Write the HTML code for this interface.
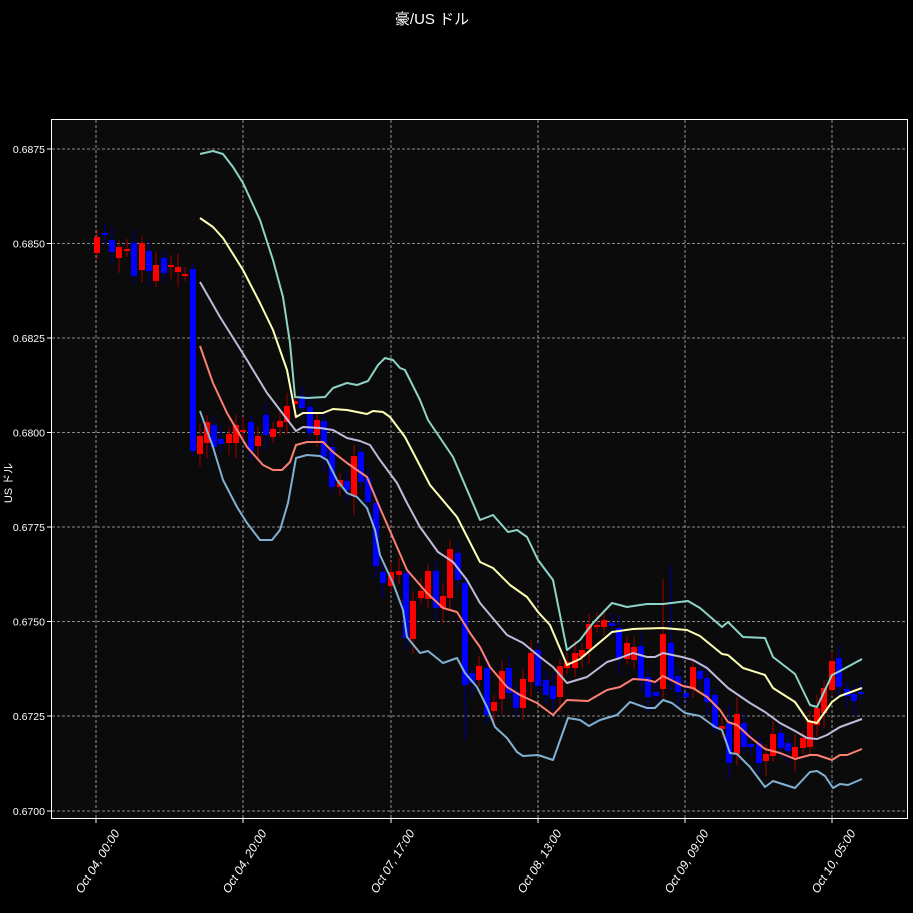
<!DOCTYPE html>
<html><head><meta charset="utf-8"><style>
html,body{margin:0;padding:0;background:#000;width:913px;height:913px;overflow:hidden}
svg{display:block}
text{font-family:"Liberation Sans","Noto Sans CJK JP",sans-serif;fill:#fff}
</style></head><body>
<svg id="s" width="913" height="913" viewBox="0 0 913 913" xmlns="http://www.w3.org/2000/svg">
<rect width="913" height="913" fill="#000"/>
<rect x="51.5" y="119.5" width="856" height="699" fill="#0b0b0b"/>
<g id="grid" stroke="#cfcfcf" stroke-width="0.8" stroke-dasharray="3,2" opacity="0.85"></g>
<g id="cand"></g>
<g id="lines" fill="none" stroke-width="2" stroke-linejoin="round"></g>
<rect x="51.5" y="119.5" width="856" height="699" fill="none" stroke="#fff" stroke-width="1"/>
<g id="ticks" stroke="#fff" stroke-width="1"></g>
<g id="labels"></g>
<text x="432" y="24" font-size="15" text-anchor="middle">豪/US ドル</text>
<text transform="translate(12,483) rotate(-90)" font-size="11" text-anchor="middle">US ドル</text>
</svg>
<script>
var NS="http://www.w3.org/2000/svg";
function el(t,a,p){var e=document.createElementNS(NS,t);for(var k in a)e.setAttribute(k,a[k]);document.getElementById(p).appendChild(e);return e;}
var ys=[[149,"0.6875"],[243.5,"0.6850"],[338,"0.6825"],[432.5,"0.6800"],[527,"0.6775"],[621.5,"0.6750"],[716,"0.6725"],[811,"0.6700"]];
var xs=[[96,"Oct 04, 00:00"],[243,"Oct 04, 20:00"],[391,"Oct 07, 17:00"],[538,"Oct 08, 13:00"],[685,"Oct 09, 09:00"],[832,"Oct 10, 05:00"]];
ys.forEach(function(y){el("line",{x1:52,x2:907,y1:y[0],y2:y[0]},"grid");el("line",{x1:47,x2:51,y1:y[0],y2:y[0]},"ticks");
var t=el("text",{x:45,y:y[0]+4,"font-size":10.5,"text-anchor":"end"},"labels");t.textContent=y[1];});
xs.forEach(function(x){el("line",{x1:x[0],x2:x[0],y1:120,y2:818},"grid");el("line",{x1:x[0],x2:x[0],y1:819,y2:823},"ticks");
var t=el("text",{transform:"translate("+(x[0]+24)+",833) rotate(-58)","font-size":12,"text-anchor":"end","font-style":"italic"},"labels");t.textContent=x[1];});
var C=[[97,"r",237,253],[105,"b",233,235],[112,"b",240,252],[119,"r",247,258],[127,"r",249,251],[134,"b",243,276],[142,"r",243,270],[149,"b",251,271],[156,"r",265,281],[164,"b",258,273],[171,"r",265,267],[178,"r",267,272],[185,"r",274,275],[193,"b",269,451],[200,"r",436,454],[207,"r",422,443],[214,"b",425,447],[221,"b",439,444],[229,"r",434,443],[236,"r",425,443],[243,"r",430,432],[251,"b",422,451],[258,"r",436,446],[266,"b",415,435],[273,"r",429,437],[280,"r",421,427],[287,"r",406,422],[295,"r",401,404],[302,"b",396,408],[310,"b",407,433],[317,"r",420,435],[324,"b",421,457],[332,"b",447,487],[340,"r",480,487],[347,"b",481,490],[354,"r",456,496],[361,"b",452,482],[368,"b",478,502],[376,"b",503,566],[383,"b",572,583],[391,"r",572,586],[399,"r",571,575],[406,"b",573,638],[413,"r",601,639],[421,"r",591,598],[428,"r",571,599],[436,"b",571,608],[443,"r",596,608],[450,"r",549,598],[458,"b",553,580],[465,"b",583,685],[472,"b",673,683],[479,"r",666,680],[487,"b",668,715],[494,"r",702,711],[502,"r",671,699],[509,"b",668,693],[516,"b",692,708],[523,"r",679,708],[531,"r",653,682],[538,"b",650,686],[546,"b",680,695],[553,"b",686,699],[560,"r",666,697],[567,"r",662,668],[575,"r",653,668],[582,"r",650,657],[589,"r",624,649],[597,"r",625,627],[604,"r",620,627],[612,"b",623,626],[619,"b",628,659],[627,"r",643,659],[634,"r",647,660],[641,"b",646,679],[648,"b",677,697],[656,"b",692,696],[663,"r",634,689],[671,"b",643,681],[678,"b",676,692],[686,"b",693,697],[693,"r",667,689],[700,"b",671,679],[707,"b",678,702],[715,"b",695,728],[722,"r",726,729],[729,"b",723,763],[737,"r",714,754],[744,"b",723,747],[751,"b",744,747],[759,"b",743,763],[766,"r",754,761],[773,"r",734,756],[781,"b",733,748],[788,"b",743,751],[795,"r",747,757],[803,"r",738,748],[810,"r",721,747],[817,"r",708,725],[824,"r",688,713],[832,"r",661,690],[839,"b",658,687],[847,"b",689,696],[854,"b",694,701],[861,"b",692,693]];
var W={193:[264,456],465:[575,740],663:[579,700],671:[565,690],729:[705,780],737:[697,765],354:[445,515],450:[540,610],406:[566,650]};
C.forEach(function(c,i){var h=(W[c[0]]||[c[2]-7-(i%3)*3,c[3]+6+(i%4)*3]);
el("line",{x1:c[0],x2:c[0],y1:h[0],y2:h[1],stroke:c[1]=="r"?"#8a0000":"#00008a","stroke-width":1.2},"cand");
el("rect",{x:c[0]-3,y:c[2],width:6,height:Math.max(2,c[3]-c[2]),fill:c[1]=="r"?"#ff0000":"#0000ff"},"cand");});
var L={
"#8dd3c7":"200,154 213,151 223,154 233,167 243,183 260,220 273,260 283,297 290,343 295,397 307,398 325,397 333,388 347,383 357,385 368,381 378,365 385,358 393,360 400,368 405,370 420,400 428,420 453,457 480,520 493,515 508,532 517,530 527,537 538,560 553,580 567,650 580,640 593,623 612,603 627,607 647,604 663,604 688,601 700,608 722,627 728,622 743,637 765,638 773,657 795,674 810,705 817,707 832,675 840,671 862,659",
"#ffffb3":"200,218 213,227 223,238 243,270 260,303 273,330 287,370 296,417 303,413 323,413 333,409 347,410 367,414 373,411 383,412 390,417 405,437 430,485 457,517 480,562 493,568 510,585 527,597 538,612 550,625 567,665 580,659 612,632 633,629 663,628 687,630 700,636 722,654 728,655 743,668 765,675 773,688 795,702 808,721 817,723 832,702 840,696 862,688",
"#bebada":"200,282 220,317 247,360 267,393 296,431 303,427 320,428 333,430 347,438 360,441 370,445 380,460 397,483 407,503 420,527 438,552 453,562 467,580 480,603 507,635 523,643 540,657 553,667 567,683 587,677 607,662 620,658 633,653 647,657 655,657 663,653 682,657 693,660 707,668 728,688 750,703 765,712 780,723 795,731 807,738 817,739 827,735 840,727 862,719",
"#fb8072":"200,346 213,383 227,413 247,447 263,465 273,470 282,470 290,462 296,445 307,442 323,442 333,452 347,463 367,477 380,508 397,547 407,570 427,593 443,608 457,612 470,633 480,647 490,667 507,687 520,695 537,703 553,715 567,700 588,701 607,690 620,687 633,679 647,680 655,682 663,676 683,686 693,688 707,697 720,710 728,722 737,725 750,737 765,749 780,753 795,759 810,755 817,755 832,760 840,755 847,755 862,749",
"#80b1d3":"200,411 213,447 223,480 237,507 247,523 260,540 272,540 280,530 288,503 296,458 307,455 320,456 327,460 337,480 347,493 357,497 367,508 375,530 380,555 393,583 403,610 407,637 420,653 428,651 443,663 457,658 465,673 477,687 487,707 495,727 507,738 517,752 523,756 538,755 553,760 568,718 580,720 589,726 600,720 617,715 630,702 647,708 655,708 663,700 672,703 685,713 700,716 715,727 722,730 730,753 737,754 750,767 765,787 773,781 795,788 810,772 817,771 825,776 833,788 840,784 848,785 862,779"};
for(var k in L)el("polyline",{points:L[k],stroke:k},"lines");
</script>
</body></html>
